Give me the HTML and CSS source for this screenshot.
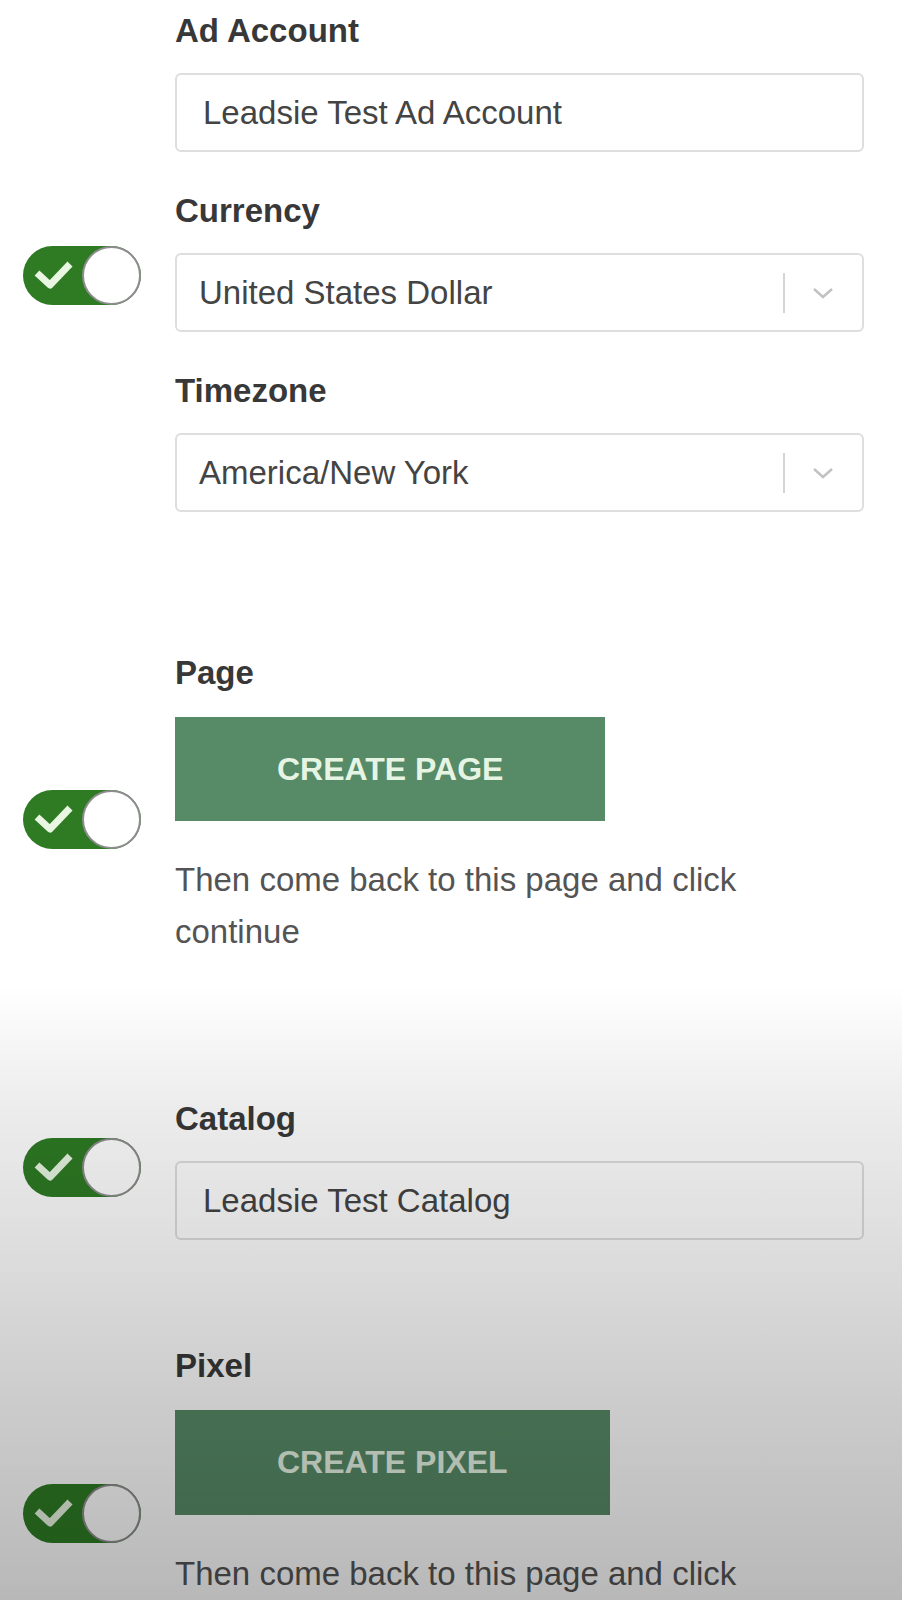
FILE: index.html
```html
<!DOCTYPE html>
<html lang="en">
<head>
<meta charset="utf-8">
<title>Leadsie assets</title>
<link rel="stylesheet" href="styles.css">
</head>
<body>
<main class="page">
  <section class="row row-account">
    <div class="switch-col">
      <span class="switch sw-account">
        <svg width="120" height="61" viewBox="0 0 120 61"><rect x="1" y="1" width="118" height="59" rx="29.5" fill="#2e7b24"/><circle cx="89.5" cy="30.5" r="28.5" fill="#fff" stroke="#8d8d8d" stroke-width="2"/><polyline points="15,28 28,40 48,19" fill="none" stroke="#e8f6e2" stroke-width="7" stroke-linejoin="round"/></svg>
      </span>
    </div>
    <div class="fields">
      <div class="field">
        <div class="label">Ad Account</div>
        <div class="input">Leadsie Test Ad Account</div>
      </div>
      <div class="field">
        <div class="label">Currency</div>
        <div class="input select">
          <span class="value">United States Dollar</span>
          <span class="divider"></span>
          <svg class="chev" width="24" height="14" viewBox="0 0 24 14"><polyline points="3,3 12,11 21,3" fill="none" stroke="#c2c2c2" stroke-width="2.5"/></svg>
        </div>
      </div>
      <div class="field">
        <div class="label">Timezone</div>
        <div class="input select">
          <span class="value">America/New York</span>
          <span class="divider"></span>
          <svg class="chev" width="24" height="14" viewBox="0 0 24 14"><polyline points="3,3 12,11 21,3" fill="none" stroke="#c2c2c2" stroke-width="2.5"/></svg>
        </div>
      </div>
    </div>
  </section>

  <section class="row row-page">
    <div class="switch-col">
      <span class="switch sw-page">
        <svg width="120" height="61" viewBox="0 0 120 61"><rect x="1" y="1" width="118" height="59" rx="29.5" fill="#2e7b24"/><circle cx="89.5" cy="30.5" r="28.5" fill="#fff" stroke="#8d8d8d" stroke-width="2"/><polyline points="15,28 28,40 48,19" fill="none" stroke="#e8f6e2" stroke-width="7" stroke-linejoin="round"/></svg>
      </span>
    </div>
    <div class="fields">
      <div class="label">Page</div>
      <div class="btn-wrap"><span class="btn">CREATE PAGE</span></div>
      <p class="note">Then come back to this page and click continue</p>
    </div>
  </section>

  <section class="row row-catalog">
    <div class="switch-col">
      <span class="switch sw-catalog">
        <svg width="120" height="61" viewBox="0 0 120 61"><rect x="1" y="1" width="118" height="59" rx="29.5" fill="#2e7b24"/><circle cx="89.5" cy="30.5" r="28.5" fill="#fff" stroke="#8d8d8d" stroke-width="2"/><polyline points="15,28 28,40 48,19" fill="none" stroke="#e8f6e2" stroke-width="7" stroke-linejoin="round"/></svg>
      </span>
    </div>
    <div class="fields">
      <div class="field">
        <div class="label">Catalog</div>
        <div class="input">Leadsie Test Catalog</div>
      </div>
    </div>
  </section>

  <section class="row row-pixel">
    <div class="switch-col">
      <span class="switch sw-pixel">
        <svg width="120" height="61" viewBox="0 0 120 61"><rect x="1" y="1" width="118" height="59" rx="29.5" fill="#2e7b24"/><circle cx="89.5" cy="30.5" r="28.5" fill="#fff" stroke="#8d8d8d" stroke-width="2"/><polyline points="15,28 28,40 48,19" fill="none" stroke="#e8f6e2" stroke-width="7" stroke-linejoin="round"/></svg>
      </span>
    </div>
    <div class="fields">
      <div class="label">Pixel</div>
      <div class="btn-wrap"><span class="btn">CREATE PIXEL</span></div>
      <p class="note">Then come back to this page and click continue</p>
    </div>
  </section>
  <div class="shade"></div>
</main>
</body>
</html>
```

FILE: styles.css
```css
html, body {
  margin: 0;
  padding: 0;
  background: #ffffff;
}

.page {
  position: relative;
  width: 902px;
  height: 1600px;
  overflow: hidden;
  box-sizing: border-box;
  padding-top: 11px;
  font-family: "Liberation Sans", Arial, Helvetica, sans-serif;
  color: #3a3a3a;
}

.row {
  display: flex;
  align-items: flex-start;
}

.row-page { margin-top: 141px; }
.row-catalog { margin-top: 141px; }
.row-pixel { margin-top: 106px; }

.switch-col {
  width: 175px;
  flex: none;
  box-sizing: border-box;
  padding-left: 22px;
}

.switch {
  display: block;
  width: 120px;
  height: 61px;
}

.switch svg { display: block; }

.sw-account { margin-top: 234px; }
.sw-page { margin-top: 136px; }
.sw-catalog { margin-top: 38px; }
.sw-pixel { margin-top: 137px; }

.fields {
  width: 689px;
  display: flex;
  flex-direction: column;
  gap: 39px;
}

.row-page .fields,
.row-pixel .fields {
  gap: 0;
}

.label {
  font-size: 33px;
  line-height: 40px;
  font-weight: 700;
  color: #383838;
}

.field .label {
  margin-bottom: 22px;
}

.input {
  box-sizing: border-box;
  height: 79px;
  border: 2px solid #dedede;
  border-radius: 6px;
  display: flex;
  align-items: center;
  padding-left: 26px;
  font-size: 33px;
  line-height: 40px;
  color: #444;
}

.select {
  padding-left: 22px;
  padding-right: 27px;
}

.select .value {
  flex: 1;
}

.divider {
  width: 2px;
  height: 40px;
  background: #d4d4d4;
  margin-right: 26px;
}

.chev { display: block; }

.btn-wrap {
  margin-top: 24px;
  display: flex;
}

.btn {
  display: inline-flex;
  align-items: center;
  height: 104px;
  padding: 0 102px;
  background: #578a66;
  color: #e6f4e4;
  font-size: 32px;
  font-weight: 700;
}

.row-pixel .btn { height: 105px; }

.note {
  margin: 33px 0 0;
  font-size: 33px;
  line-height: 52px;
  color: #545454;
}

.shade {
  position: absolute;
  left: 0;
  top: 0;
  width: 902px;
  height: 1600px;
  pointer-events: none;
  background: linear-gradient(to bottom,
    rgba(0,0,0,0) 0px,
    rgba(0,0,0,0) 985px,
    rgba(0,0,0,0.07) 1100px,
    rgba(0,0,0,0.135) 1250px,
    rgba(0,0,0,0.2) 1400px,
    rgba(0,0,0,0.28) 1600px);
}
```
